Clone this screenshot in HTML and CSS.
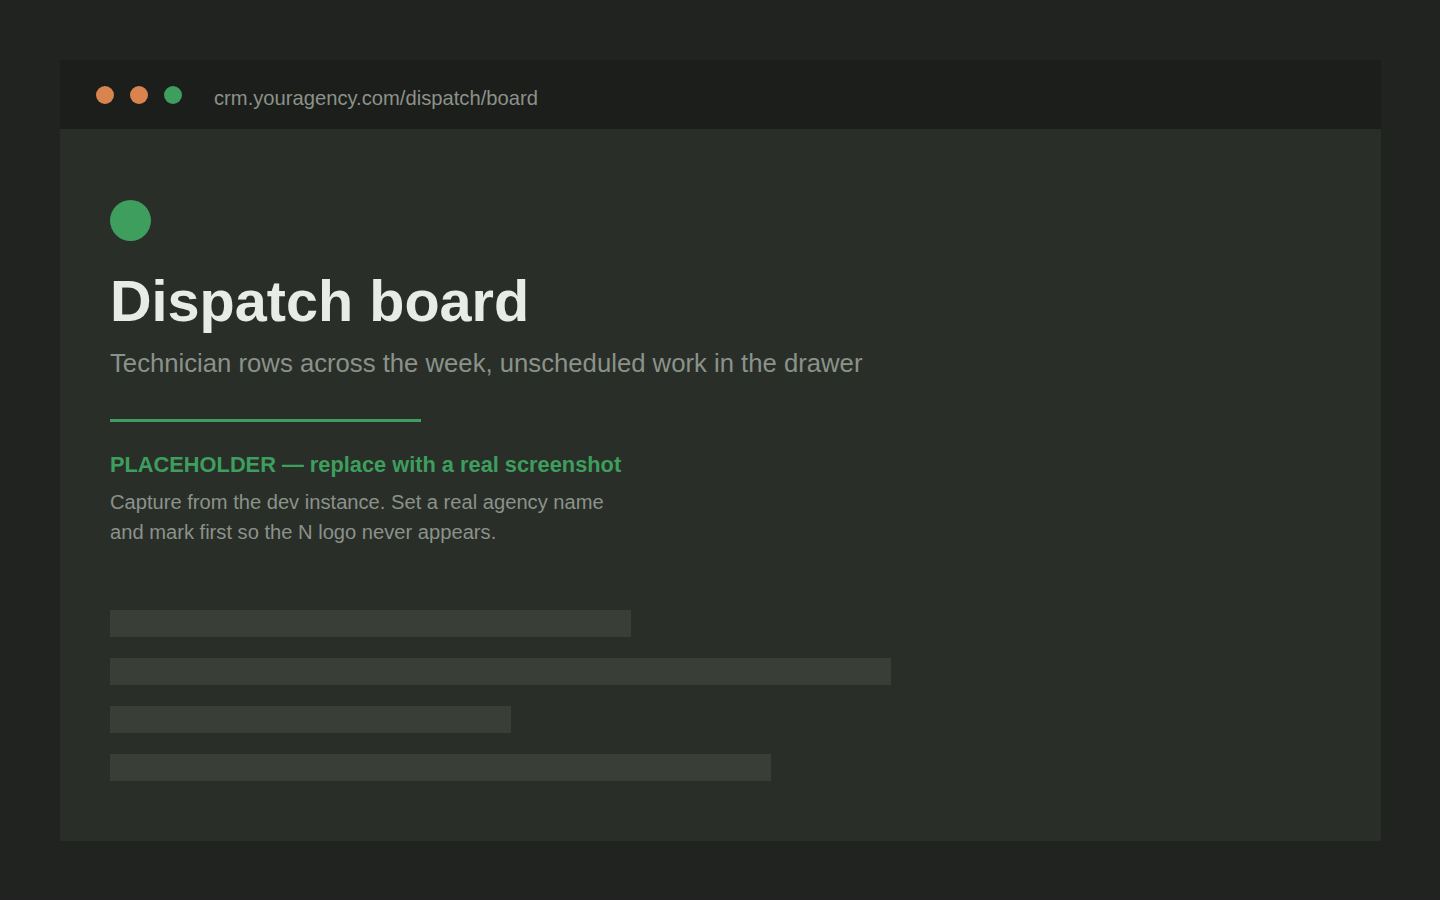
FILE: index.html
```html
<!DOCTYPE html>
<html lang="en">
<head>
<meta charset="utf-8">
<title>Dispatch board</title>
<link rel="stylesheet" href="styles.css">
</head>
<body>
<div class="stage">
  <div class="window">
    <div class="titlebar">
      <div class="dots">
        <span class="dot dot-orange"></span>
        <span class="dot dot-orange"></span>
        <span class="dot dot-green"></span>
      </div>
      <div class="url">crm.youragency.com/dispatch/board</div>
    </div>
    <div class="content">
      <div class="mark"></div>
      <h1 class="title">Dispatch board</h1>
      <p class="subtitle">Technician rows across the week, unscheduled work in the drawer</p>
      <div class="rule"></div>
      <h2 class="note-head">PLACEHOLDER — replace with a real screenshot</h2>
      <p class="note-body">Capture from the dev instance. Set a real agency name and mark first so the N logo never appears.</p>
      <div class="bars">
        <div class="bar bar-1"></div>
        <div class="bar bar-2"></div>
        <div class="bar bar-3"></div>
        <div class="bar bar-4"></div>
      </div>
    </div>
  </div>
</div>
</body>
</html>
```

FILE: styles.css
```css
* { box-sizing: border-box; }
html, body { margin: 0; padding: 0; }
body {
  background: #212320;
  font-family: "Liberation Sans", Arial, sans-serif;
  width: 1440px;
  height: 900px;
  overflow: hidden;
}
.stage {
  padding: 60px 0 0 60px;
}
.window {
  width: 1321px;
  background: #2a2e29;
}
.titlebar {
  height: 69px;
  background: #1c1e1b;
  display: flex;
  align-items: center;
  padding-left: 36px;
}
.dots {
  display: flex;
  gap: 16px;
  padding-top: 1px;
}
.dot {
  width: 18px;
  height: 18px;
  border-radius: 50%;
  display: block;
}
.dot-orange { background: #d9834f; }
.dot-green { background: #3d9e5d; }
.url {
  margin-left: 32px;
  font-size: 20.2px;
  color: #8b9289;
  padding-top: 7px;
}
.content {
  padding: 71px 50px 60px;
}
.mark {
  width: 41px;
  height: 41px;
  border-radius: 50%;
  background: #3d9e5d;
}
.title {
  margin: 29px 0 0;
  font-size: 57.6px;
  line-height: 1.1;
  font-weight: 700;
  color: #e8ebe6;
}
.subtitle {
  margin: 14px 0 0;
  font-size: 25.7px;
  line-height: 1.3;
  color: #8b9289;
}
.rule {
  margin-top: 38px;
  width: 311px;
  height: 3px;
  background: #3d9e5d;
}
.note-head {
  margin: 29px 0 0;
  font-size: 21.8px;
  line-height: 1.3;
  font-weight: 700;
  color: #3d9e5d;
}
.note-body {
  margin: 8px 0 0;
  width: 530px;
  font-size: 20.15px;
  line-height: 30px;
  color: #8b9289;
}
.bars {
  margin-top: 63px;
  display: flex;
  flex-direction: column;
  gap: 21px;
}
.bar {
  height: 27px;
  background: #393e37;
}
.bar-1 { width: 521px; }
.bar-2 { width: 781px; }
.bar-3 { width: 401px; }
.bar-4 { width: 661px; }
```
